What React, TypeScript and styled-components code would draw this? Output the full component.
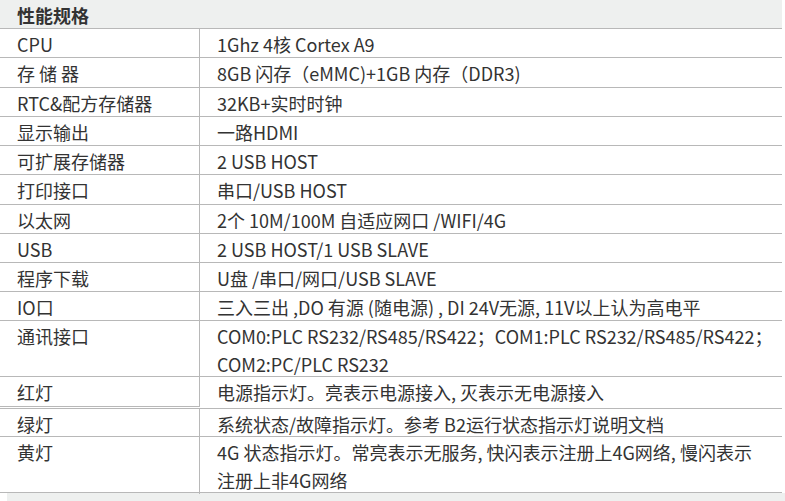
import React from "react";
import styled, { createGlobalStyle } from "styled-components";

const Global = createGlobalStyle`
  html, body { margin: 0; padding: 0; background: #ffffff; overflow: hidden; }
  body { font-family: "Noto Sans CJK SC", "Noto Sans", sans-serif; color: #333333; }
`;

const Page = styled.div`
  width: 785px;
  height: 501px;
  overflow: hidden;
`;

const Table = styled.div`
  width: 782px;
  display: flex;
  flex-direction: column;
`;

const Header = styled.div`
  height: 29px;
  box-sizing: border-box;
  background: #eef0ef;
  border-bottom: 1px solid #b8b8b8;
  padding-left: 17px;
  font-size: 18px;
  font-weight: 700;
  color: #333333;
  line-height: 28px;
  padding-top: 1px;
`;

const Row = styled.div<{ $h: number }>`
  display: grid;
  grid-template-columns: 200px 1fr;
  height: ${(p) => p.$h}px;
  box-sizing: border-box;
  border-bottom: 1px solid #b8b8b8;
  font-size: 18px;
  line-height: 28px;
`;

const Label = styled.div<{ $double?: boolean }>`
  box-sizing: border-box;
  border-right: 1px solid #b8b8b8;
  padding-left: 17px;
  padding-top: 1px;
  ${(p) => (p.$double ? "border-bottom: 1px solid #b8b8b8; margin-bottom: 2px;" : "")}
`;

const Value = styled.div`
  padding-left: 17px;
  padding-top: 1px;
  white-space: nowrap;
`;

const Footer = styled.div`
  margin-left: 7px;
  height: 9px;
  background: #eef0ef;
`;

type Item = { label: string; value: string[]; h: number; double?: boolean };

const items: Item[] = [
  { label: "CPU", value: ["1Ghz 4核 Cortex A9"], h: 29 },
  { label: "存 储 器", value: ["8GB 闪存（eMMC)+1GB 内存（DDR3)"], h: 30 },
  { label: "RTC&配方存储器", value: ["32KB+实时时钟"], h: 28.7 },
  { label: "显示输出", value: ["一路HDMI"], h: 29 },
  { label: "可扩展存储器", value: ["2 USB HOST"], h: 29.3 },
  { label: "打印接口", value: ["串口/USB HOST"], h: 30 },
  { label: "以太网", value: ["2个 10M/100M 自适应网口 /WIFI/4G"], h: 29 },
  { label: "USB", value: ["2 USB HOST/1 USB SLAVE"], h: 29 },
  { label: "程序下载", value: ["U盘 /串口/网口/USB SLAVE"], h: 29.4 },
  { label: "IO口", value: ["三入三出 ,DO 有源 (随电源) , DI 24V无源, 11V以上认为高电平"], h: 28.3 },
  {
    label: "通讯接口",
    value: ["COM0:PLC RS232/RS485/RS422；COM1:PLC RS232/RS485/RS422；", "COM2:PC/PLC RS232"],
    h: 56,
  },
  { label: "红灯", value: ["电源指示灯。亮表示电源接入, 灭表示无电源接入"], h: 32.3, double: true },
  { label: "绿灯", value: ["系统状态/故障指示灯。参考 B2运行状态指示灯说明文档"], h: 28.4 },
  {
    label: "黄灯",
    value: ["4G 状态指示灯。常亮表示无服务, 快闪表示注册上4G网络, 慢闪表示", "注册上非4G网络"],
    h: 56,
  },
];

export default function App() {
  return (
    <Page>
      <Global />
      <Table>
        <Header>性能规格</Header>
        {items.map((it) => (
          <Row key={it.label} $h={it.h}>
            <Label $double={it.double}>{it.label}</Label>
            <Value>
              {it.value.map((v, i) => (
                <div key={i}>{v}</div>
              ))}
            </Value>
          </Row>
        ))}
      </Table>
      <Footer />
    </Page>
  );
}
